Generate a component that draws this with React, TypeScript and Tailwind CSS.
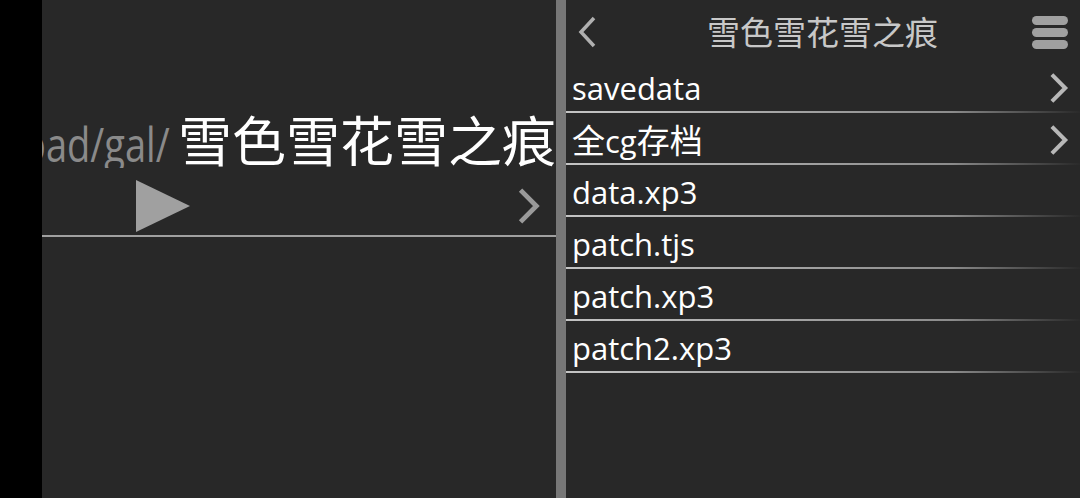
import React from "react";

const files = [
  { name: "savedata", dir: true },
  { name: "全cg存档", dir: true },
  { name: "data.xp3", dir: false },
  { name: "patch.tjs", dir: false },
  { name: "patch.xp3", dir: false },
  { name: "patch2.xp3", dir: false },
];

const Chevron = ({ className }: { className?: string }) => (
  <svg viewBox="0 0 24 36" className={className} fill="none">
    <path d="M4 3 L19 18 L4 33" stroke="currentColor" strokeWidth="4.5" />
  </svg>
);

// split latin and CJK parts so the CJK glyphs come out a little larger
const Label = ({ text }: { text: string }) => {
  const parts = text.split(/([\u4e00-\u9fff]+)/).filter(Boolean);
  return (
    <>
      {parts.map((p, i) =>
        /[\u4e00-\u9fff]/.test(p) ? (
          <span key={i} className="text-[33px]">
            {p}
          </span>
        ) : (
          <span key={i}>{p}</span>
        ),
      )}
    </>
  );
};

export default function App() {
  return (
    <div
      className="flex h-[498px] w-[1080px] overflow-hidden bg-black"
      style={{ fontFamily: '"Open Sans", "Noto Sans CJK SC", sans-serif' }}
    >
      <div className="w-[42px] shrink-0 bg-black" />

      {/* left pane */}
      <div className="flex w-[514px] shrink-0 flex-col bg-[#282828]">
        <div className="mt-[114px] flex items-baseline justify-end overflow-hidden whitespace-nowrap">
          <span className="origin-right scale-x-[0.81] text-[47px] leading-none text-[#8a8a8a]">
            /storage/emulated/0/Download/gal/
          </span>
          <span className="ml-[8px] text-[54px] leading-none text-white">雪色雪花雪之痕</span>
        </div>
        <div className="flex h-[69px] items-center justify-between border-b-2 border-[#a0a0a0] pl-[94px] pr-[14px] pt-[8px]">
          <svg viewBox="0 0 54 52" className="h-[52px] w-[54px]">
            <polygon points="0,0 54,26 0,52" fill="#a0a0a0" />
          </svg>
          <Chevron className="h-[38px] w-[26px] text-[#9a9a9a]" />
        </div>
      </div>

      <div className="w-[10px] shrink-0 bg-[#777777]" />

      {/* right pane */}
      <div className="flex flex-1 flex-col bg-[#282828]">
        <div className="flex h-[61px] items-center justify-between pl-[11px] pr-[12px] pt-[3px]">
          <div className="w-[36px]">
            <svg viewBox="0 0 20 32" className="h-[32px] w-[20px]" fill="none">
              <path d="M17 2 L4 16 L17 30" stroke="#b0b0b0" strokeWidth="3.5" />
            </svg>
          </div>
          <span className="text-[33px] leading-none text-[#c8c8c8]">雪色雪花雪之痕</span>
          <div className="flex w-[36px] flex-col gap-[3px]">
            <div className="h-[9px] rounded-full bg-[#a0a0a0]" />
            <div className="h-[9px] rounded-full bg-[#a0a0a0]" />
            <div className="h-[9px] rounded-full bg-[#a0a0a0]" />
          </div>
        </div>
        {files.map((f) => (
          <div key={f.name} className="flex flex-col">
            <div className="flex h-[50px] items-center justify-between pl-[6px] pr-[10px] pt-[4px]">
              <span className="text-[31px] leading-none text-white">
                <Label text={f.name} />
              </span>
              {f.dir && <Chevron className="h-[32px] w-[22px] text-[#b8b8b8]" />}
            </div>
            <div className="h-[2px] bg-linear-to-r from-[#c4c4c4] via-[#8c8c8c] via-75% to-[#2a2a2a]" />
          </div>
        ))}
      </div>
    </div>
  );
}
